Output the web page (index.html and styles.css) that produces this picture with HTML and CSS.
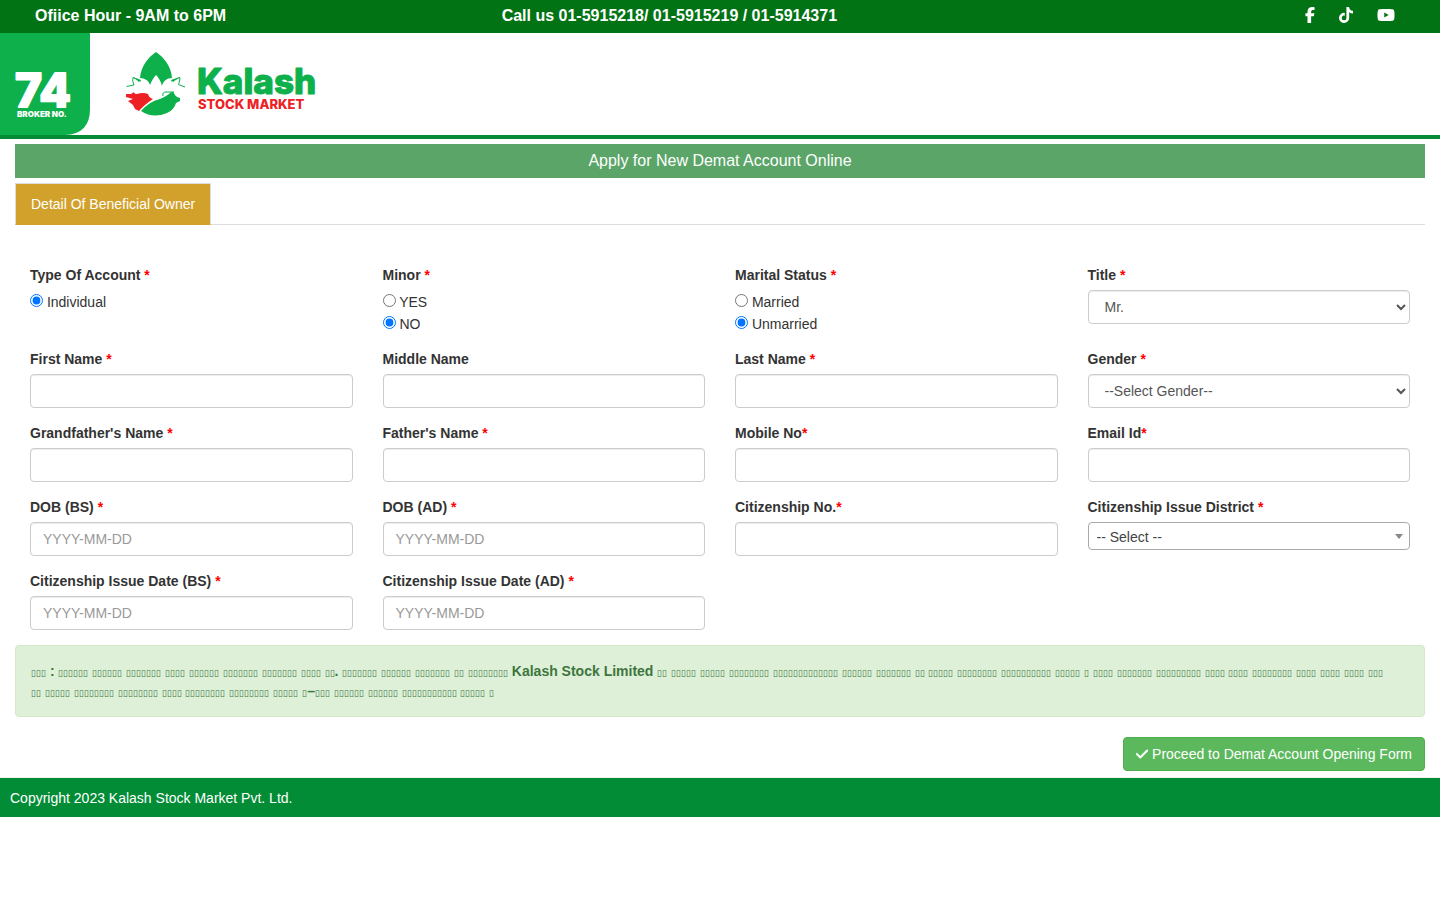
FILE: index.html
```html
<!DOCTYPE html>
<html lang="en">
<head>
<meta charset="utf-8">
<meta name="viewport" content="width=device-width, initial-scale=1">
<title>Kalash Stock Market - Apply for New Demat Account</title>
<link rel="stylesheet" href="styles.css">
</head>
<body>
<div class="topbar">
  <div>Ofiice Hour - 9AM to 6PM</div>
  <div>Call us 01-5915218/ 01-5915219 / 01-5914371</div>
  <nav class="social">
    <a href="#" aria-label="Facebook"><svg width="10" height="16" viewBox="0 0 320 512"><path d="M80 299.300V512H196V299.300h86.500l18-97.800H196V166.900c0-51.700 20.300-71.500 72.700-71.500c16.300 0 29.400 .4 37 1.200V7.900C291.400 4 256.400 0 236.200 0C129.300 0 80 50.500 80 159.400v42.100H14v97.800H80z"/></svg></a>
    <a href="#" aria-label="TikTok"><svg width="14" height="16" viewBox="0 0 448 512"><path d="M448,209.91a210.06,210.06,0,0,1-122.77-39.25V349.38A162.55,162.55,0,1,1,185,188.31V278.2a74.62,74.62,0,1,0,52.23,71.18V0l88,0a121.18,121.18,0,0,0,1.86,22.17h0A122.18,122.18,0,0,0,381,102.39a121.43,121.43,0,0,0,67,20.14Z"/></svg></a>
    <a href="#" aria-label="YouTube"><svg width="18" height="16" viewBox="0 0 576 512"><path d="M549.655 124.083c-6.281-23.65-24.787-42.276-48.284-48.597C458.781 64 288 64 288 64S117.22 64 74.629 75.486c-23.497 6.322-42.003 24.947-48.284 48.597-11.412 42.867-11.412 132.305-11.412 132.305s0 89.438 11.412 132.305c6.281 23.65 24.787 41.5 48.284 47.821C117.22 448 288 448 288 448s170.78 0 213.371-11.486c23.497-6.321 42.003-24.171 48.284-47.821 11.412-42.867 11.412-132.305 11.412-132.305s0-89.438-11.412-132.305zm-317.51 213.508V175.185l142.739 81.205-142.739 81.201z"/></svg></a>
  </nav>
</div>

<header class="header">
  <a href="#" class="logo" aria-label="Kalash Stock Market, broker number 74">
    <svg width="330" height="102" viewBox="0 33 330 102">
      <path fill="#0db04b" d="M0 33H90V109Q90 134 65 135H0Z"/>
      <text class="logo-number" x="15" y="107">74</text>
      <text class="logo-broker" x="17" y="117">BROKER NO.</text>
      <path fill="#0db04b" d="M156 52C149 57 141 65 140 78C145 78 149 81 150 85C152 80 154 77 156 75C158 77 161 81 162 86C163 81 167 78 172 78C171 65 163 57 156 52Z"/>
      <path fill="none" stroke="#0db04b" stroke-width="1" d="M141 81L133 77.500Q132 81 134 85L126.500 86.500M171 81L180 77.500Q180 81 178.500 84.500L185 87"/>
      <path fill="#0db04b" d="M133 77L141 80L139 82ZM180 77L171 80L173 82Z"/>
      <path fill="#ed2024" d="M126 94L131 94L134 92Q134 94 137 94Q143 92 148 94Q149 98 153 99Q144 105 139 111L135 109L133 105L128 101L133 99L126 97Z"/>
      <path fill="#0db04b" d="M141 111Q150 101 160 99Q167 96 170 93Q173 91 174 93Q175 97 180 98L180 101L176 103Q174 110 167 113Q153 119 141 111Z"/>
      <path fill="none" stroke="#0db04b" stroke-width="1" d="M174 92H166Q162 92 163 96"/>
      <text class="logo-name" x="197" y="94">Kalash</text>
      <text class="logo-sub" x="198" y="109">STOCK MARKET</text>
    </svg>
  </a>
</header>

<main class="page">
  <h1 class="page-title">Apply for New Demat Account Online</h1>
  <div class="tabs"><a href="#details" class="tab">Detail Of Beneficial Owner</a></div>

  <form id="details">
    <div class="fields">
      <fieldset class="field">
        <legend>Type Of Account <span class="req">*</span></legend>
        <label class="option"><input type="radio" name="type" checked> Individual</label>
      </fieldset>
      <fieldset class="field">
        <legend>Minor <span class="req">*</span></legend>
        <label class="option"><input type="radio" name="minor"> YES</label>
        <label class="option"><input type="radio" name="minor" checked> NO</label>
      </fieldset>
      <fieldset class="field">
        <legend>Marital Status <span class="req">*</span></legend>
        <label class="option"><input type="radio" name="marital"> Married</label>
        <label class="option"><input type="radio" name="marital" checked> Unmarried</label>
      </fieldset>
      <div class="field">
        <label for="title">Title <span class="req">*</span></label>
        <select class="control" id="title"><option>Mr.</option><option>Mrs.</option><option>Ms.</option></select>
      </div>

      <div class="field"><label for="first">First Name <span class="req">*</span></label><input class="control" id="first" type="text"></div>
      <div class="field"><label for="middle">Middle Name</label><input class="control" id="middle" type="text"></div>
      <div class="field"><label for="last">Last Name <span class="req">*</span></label><input class="control" id="last" type="text"></div>
      <div class="field">
        <label for="gender">Gender <span class="req">*</span></label>
        <select class="control" id="gender"><option>--Select Gender--</option><option>Male</option><option>Female</option></select>
      </div>

      <div class="field"><label for="grandfather">Grandfather's Name <span class="req">*</span></label><input class="control" id="grandfather" type="text"></div>
      <div class="field"><label for="father">Father's Name <span class="req">*</span></label><input class="control" id="father" type="text"></div>
      <div class="field"><label for="mobile">Mobile No<span class="req">*</span></label><input class="control" id="mobile" type="tel"></div>
      <div class="field"><label for="email">Email Id<span class="req">*</span></label><input class="control" id="email" type="email"></div>

      <div class="field"><label for="dob-bs">DOB (BS) <span class="req">*</span></label><input class="control" id="dob-bs" type="text" placeholder="YYYY-MM-DD"></div>
      <div class="field"><label for="dob-ad">DOB (AD) <span class="req">*</span></label><input class="control" id="dob-ad" type="text" placeholder="YYYY-MM-DD"></div>
      <div class="field"><label for="citizenship">Citizenship No.<span class="req">*</span></label><input class="control" id="citizenship" type="text"></div>
      <div class="field">
        <label for="district">Citizenship Issue District <span class="req">*</span></label>
        <div class="picker"><select id="district"><option>-- Select --</option></select></div>
      </div>

      <div class="field"><label for="issue-bs">Citizenship Issue Date (BS) <span class="req">*</span></label><input class="control" id="issue-bs" type="text" placeholder="YYYY-MM-DD"></div>
      <div class="field"><label for="issue-ad">Citizenship Issue Date (AD) <span class="req">*</span></label><input class="control" id="issue-ad" type="text" placeholder="YYYY-MM-DD"></div>
    </div>

    <p class="notice">
      <i>▯▯▯</i> :
      <i>▯▯▯▯▯▯</i>
      <i>▯▯▯▯▯▯</i>
      <i>▯▯▯▯▯▯▯</i>
      <i>▯▯▯▯</i>
      <i>▯▯▯▯▯▯</i>
      <i>▯▯▯▯▯▯▯</i>
      <i>▯▯▯▯▯▯▯</i>
      <i>▯▯▯▯</i>
      <i>▯▯</i>.
      <i>▯▯▯▯▯▯▯</i>
      <i>▯▯▯▯▯▯</i>
      <i>▯▯▯▯▯▯▯</i>
      <i>▯▯</i>
      <i>▯▯▯▯▯▯▯▯</i>
      Kalash Stock Limited
      <i>▯▯</i>
      <i>▯▯▯▯▯</i>
      <i>▯▯▯▯▯</i>
      <i>▯▯▯▯▯▯▯▯</i>
      <i>▯▯▯▯▯▯▯▯▯▯▯▯▯</i>
      <i>▯▯▯▯▯▯</i>
      <i>▯▯▯▯▯▯▯</i>
      <i>▯▯</i>
      <i>▯▯▯▯▯</i>
      <i>▯▯▯▯▯▯▯▯</i>
      <i>▯▯▯▯▯▯▯▯▯▯</i>
      <i>▯▯▯▯▯</i>
      <i>▯</i>
      <i>▯▯▯▯</i>
      <i>▯▯▯▯▯▯▯</i>
      <i>▯▯▯▯▯▯▯▯▯</i>
      <i>▯▯▯▯</i>
      <i>▯▯▯▯</i>
      <i>▯▯▯▯▯▯▯▯</i>
      <i>▯▯▯▯</i>
      <i>▯▯▯▯</i>
      <i>▯▯▯▯</i>
      <i>▯▯▯</i><br>
      <i>▯▯</i>
      <i>▯▯▯▯▯</i>
      <i>▯▯▯▯▯▯▯▯</i>
      <i>▯▯▯▯▯▯▯▯</i>
      <i>▯▯▯▯</i>
      <i>▯▯▯▯▯▯▯▯</i>
      <i>▯▯▯▯▯▯▯▯</i>
      <i>▯▯▯▯▯</i>
      <i>▯</i>–<i>▯▯▯</i>
      <i>▯▯▯▯▯▯</i>
      <i>▯▯▯▯▯▯</i>
      <i>▯▯▯▯▯▯▯▯▯▯▯</i>
      <i>▯▯▯▯▯</i>
      <i>▯</i>
    </p>

    <div class="actions">
      <button type="submit" class="submit"><svg width="12" height="14" viewBox="0 0 448 512"><path d="M438.6 105.400c12.500 12.500 12.500 32.800 0 45.300l-256 256c-12.500 12.500-32.800 12.500-45.300 0l-128-128c-12.500-12.500-12.500-32.800 0-45.300s32.800-12.500 45.300 0L160 338.700 393.400 105.400c12.500-12.500 32.800-12.500 45.300 0z"/></svg> Proceed to Demat Account Opening Form</button>
    </div>
  </form>
</main>

<footer class="footer">Copyright 2023 Kalash Stock Market Pvt. Ltd.</footer>
</body>
</html>
```

FILE: styles.css
```css
*, *::before, *::after { box-sizing: border-box; }

body {
  margin: 0;
  font: 14px/20px "Liberation Sans", Arial, sans-serif;
  color: #333;
  background: #fff;
}

.topbar {
  display: grid;
  grid-template-columns: repeat(3, 1fr);
  padding: 5px 20px 6px;
  background: #027315;
  color: #fff;
  font-size: 16px;
  line-height: 22px;
  font-weight: bold;
}
.topbar > * { padding: 0 15px; }
.social {
  display: flex;
  justify-content: flex-end;
  align-items: flex-start;
  gap: 24px;
}
.topbar .social { padding: 2px 25px 0 0; }
.social a { display: flex; color: #fff; }
.social svg, .submit svg { fill: currentColor; }

.header { border-bottom: 4px solid #028c36; }
.logo, .logo svg { display: block; }
.logo { width: fit-content; }
.logo text { font-family: Inter, "Noto Sans", sans-serif; font-weight: 800; stroke-linejoin: round; }
.logo-number { font-size: 46px; fill: #fff; stroke: #fff; stroke-width: 2px; }
.logo .logo-broker { font-size: 8px; font-weight: 900; fill: #fff; }
.logo-name { font-size: 35px; fill: #0db04b; stroke: #0db04b; stroke-width: 1px; }
.logo-sub { font-size: 13px; fill: #ed2024; }

.page { padding: 5px 15px 0; }
.page-title {
  margin: 0 0 5px;
  padding: 7px;
  background: #5aa567;
  color: #fff;
  font-size: 16px;
  font-weight: normal;
  line-height: 20px;
  text-align: center;
}

.tabs { display: flex; box-shadow: inset 0 -1px #ddd; }
.tab {
  padding: 10px 15px;
  border: 1px solid #ddd;
  border-bottom-color: #d2a12b;
  background: #d2a12b;
  color: #fff;
  text-decoration: none;
}

.fields {
  display: grid;
  grid-template-columns: repeat(4, 1fr);
  gap: 15px 30px;
  padding: 40px 15px 15px;
}
.field { min-width: 0; margin: 0; padding: 0; border: 0; }
.field legend, .field > label {
  display: block;
  padding: 0;
  margin-bottom: 5px;
  font-weight: bold;
}
.field > .option { font-weight: normal; margin: 0; }
.option input { margin: 4px 0 0; }
.req { color: #f00; }

.control {
  display: block;
  width: 100%;
  height: 34px;
  padding: 6px 12px;
  border: 1px solid #ccc;
  border-radius: 4px;
  background: #fff;
  box-shadow: inset 0 1px 1px rgba(0, 0, 0, .075);
  color: #555;
  font: inherit;
}
.control::placeholder { color: #999; }

.picker { position: relative; }
.picker select {
  display: block;
  width: 100%;
  height: 28px;
  padding: 1px 20px 0 8px;
  appearance: none;
  border: 1px solid #aaa;
  border-radius: 4px;
  background: #fff;
  color: #444;
  font: inherit;
}
.picker::after {
  content: "";
  position: absolute;
  top: 12px;
  right: 7px;
  border: 4px solid transparent;
  border-top: 5px solid #888;
  border-bottom: 0;
  pointer-events: none;
}

.notice {
  margin: 0 0 20px;
  padding: 15px;
  border: 1px solid #d6e9c6;
  border-radius: 4px;
  background: #dff0d8;
  color: #3c763d;
  font-weight: bold;
}
.notice i {
  font: normal 9px/1 "Liberation Sans", Arial, sans-serif;
  white-space: nowrap;
}

.actions { display: flex; justify-content: flex-end; margin-bottom: 6px; }
.submit {
  padding: 6px 12px;
  border: 1px solid #4cae4c;
  border-radius: 4px;
  background: #5cb85c;
  color: #fff;
  font: inherit;
}
.submit svg { vertical-align: -2px; stroke: currentColor; stroke-width: 20px; }

.footer {
  padding: 10px 10px 9px;
  border-top: 1px solid #eee;
  background: #028c36;
  background-clip: padding-box;
  color: #fff;
}
```
